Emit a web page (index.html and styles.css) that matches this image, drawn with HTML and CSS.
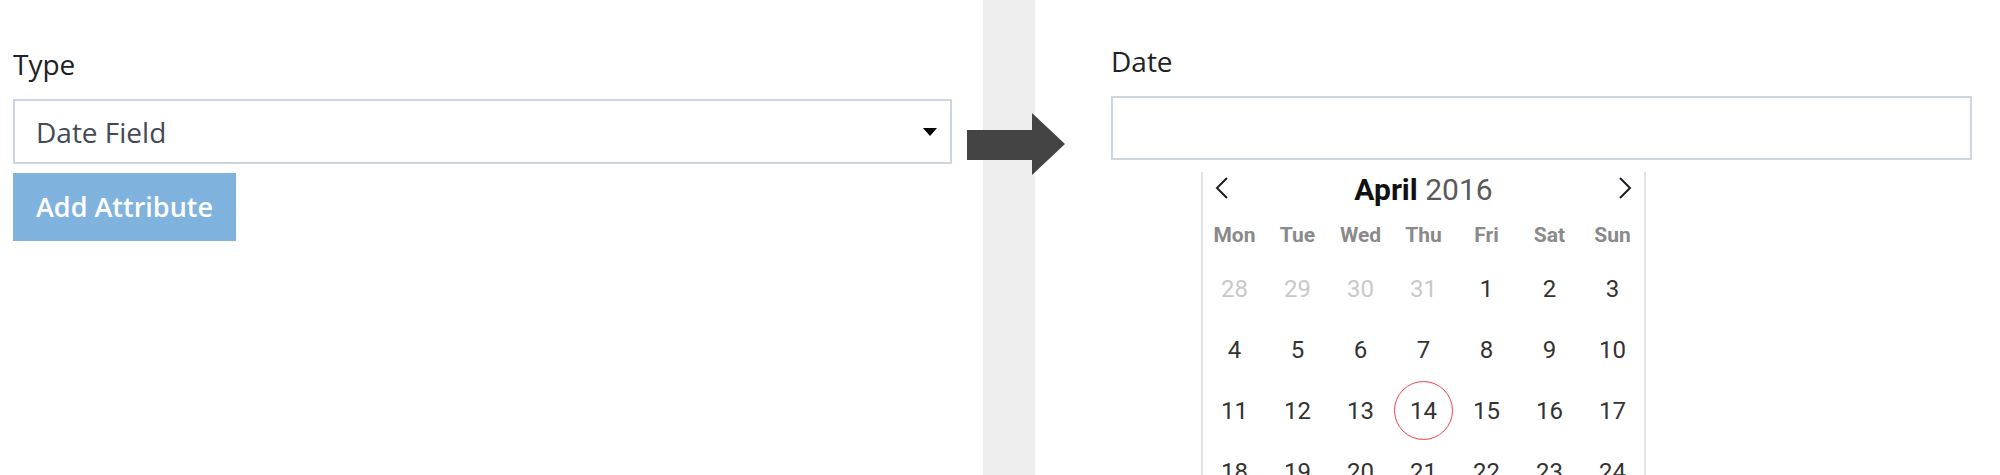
FILE: index.html
```html
<!DOCTYPE html>
<html lang="en">
<head>
<meta charset="utf-8">
<title>Date field</title>
<link rel="stylesheet" href="styles.css">
</head>
<body>
<div class="page">
  <section class="panel panel-left">
    <div class="field-label">Type</div>
    <div class="select">
      <span class="select-value">Date Field</span>
      <span class="caret"></span>
    </div>
    <button class="btn">Add Attribute</button>
  </section>

  <div class="divider">
    <svg class="arrow" width="98" height="62" viewBox="0 0 98 62">
      <polygon points="0,17 65,17 65,0 98,31 65,62 65,47 0,47" fill="#444444"/>
    </svg>
  </div>

  <section class="panel panel-right">
    <div class="field-label">Date</div>
    <div class="input"></div>
    <div class="calendar">
      <div class="cal-header">
        <svg class="chev" width="14" height="22" viewBox="0 0 14 22"><polyline points="12,1 2,11 12,21" fill="none" stroke="#1e1e28" stroke-width="2"/></svg>
        <div class="cal-title"><span class="month">April</span> <span class="year">2016</span></div>
        <svg class="chev" width="14" height="22" viewBox="0 0 14 22"><polyline points="2,1 12,11 2,21" fill="none" stroke="#1e1e28" stroke-width="2"/></svg>
      </div>
      <div class="weekdays">
        <span>Mon</span><span>Tue</span><span>Wed</span><span>Thu</span><span>Fri</span><span>Sat</span><span>Sun</span>
      </div>
      <div class="days">
        <span class="muted">28</span><span class="muted">29</span><span class="muted">30</span><span class="muted">31</span><span>1</span><span>2</span><span>3</span>
        <span>4</span><span>5</span><span>6</span><span>7</span><span>8</span><span>9</span><span>10</span>
        <span>11</span><span>12</span><span>13</span><span><i class="today">14</i></span><span>15</span><span>16</span><span>17</span>
        <span>18</span><span>19</span><span>20</span><span>21</span><span>22</span><span>23</span><span>24</span>
      </div>
    </div>
  </section>
</div>
</body>
</html>
```

FILE: styles.css
```css
html, body {
  margin: 0;
  padding: 0;
  background: #ffffff;
}

.page {
  display: flex;
  width: 2000px;
  height: 475px;
  overflow: hidden;
  font-family: "Open Sans", "Liberation Sans", sans-serif;
}

.panel {
  box-sizing: border-box;
  display: flex;
  flex-direction: column;
  align-items: flex-start;
}

.panel > * {
  flex-shrink: 0;
}

.panel-left {
  flex: 0 0 983px;
  padding: 45px 31px 0 13px;
}

.panel-right {
  flex: 1 1 auto;
  padding: 42px 28px 0 76px;
}

.field-label {
  font-size: 28px;
  line-height: 38px;
  color: #222222;
  margin-bottom: 16px;
}

.select {
  box-sizing: border-box;
  align-self: stretch;
  height: 65px;
  border: 2px solid #cdd6e0;
  display: flex;
  align-items: center;
  justify-content: space-between;
  padding: 0 13px 0 21px;
}

.select-value {
  font-size: 28px;
  line-height: 38px;
  color: #434a54;
}

.caret {
  width: 0;
  height: 0;
  border-left: 7px solid transparent;
  border-right: 7px solid transparent;
  border-top: 8px solid #000000;
}

.btn {
  margin-top: 9px;
  height: 68px;
  padding: 0 23px;
  border: none;
  background: #7fb2dc;
  color: #ffffff;
  font-family: "Open Sans", "Liberation Sans", sans-serif;
  font-size: 27px;
  font-weight: 600;
  line-height: 38px;
}

.divider {
  flex: 0 0 52px;
  background: #eeeeee;
  position: relative;
}

.arrow {
  position: absolute;
  left: -16px;
  top: 113px;
  display: block;
}

.input {
  box-sizing: border-box;
  align-self: stretch;
  height: 64px;
  border: 2px solid #cdd6e0;
}

.calendar {
  box-sizing: border-box;
  width: 445px;
  margin: 12px 0 0 90px;
  border-left: 2px solid #e2e2e2;
  border-right: 2px solid #e2e2e2;
  font-family: Roboto, "Liberation Sans", sans-serif;
}

.cal-header {
  display: flex;
  align-items: flex-start;
  justify-content: space-between;
  height: 40px;
  padding: 0 12px;
}

.chev {
  display: block;
  margin-top: 5px;
}

.cal-title {
  font-size: 30px;
  line-height: 36px;
  color: #111111;
}

.month {
  font-weight: 700;
}

.year {
  font-weight: 400;
  color: #5a5a5a;
}

.weekdays,
.days {
  display: grid;
  grid-template-columns: repeat(7, 1fr);
  text-align: center;
}

.weekdays span {
  height: 46px;
  line-height: 46px;
  font-size: 21px;
  font-weight: 700;
  color: #8a8a8a;
}

.days span {
  height: 61px;
  display: flex;
  align-items: center;
  justify-content: center;
  font-size: 24px;
  color: #333333;
}

.days span.muted {
  color: #c9c9c9;
}

.today {
  font-style: normal;
  box-sizing: border-box;
  width: 59px;
  height: 59px;
  border: 1.5px solid #f0444c;
  border-radius: 50%;
  display: flex;
  align-items: center;
  justify-content: center;
}
```
